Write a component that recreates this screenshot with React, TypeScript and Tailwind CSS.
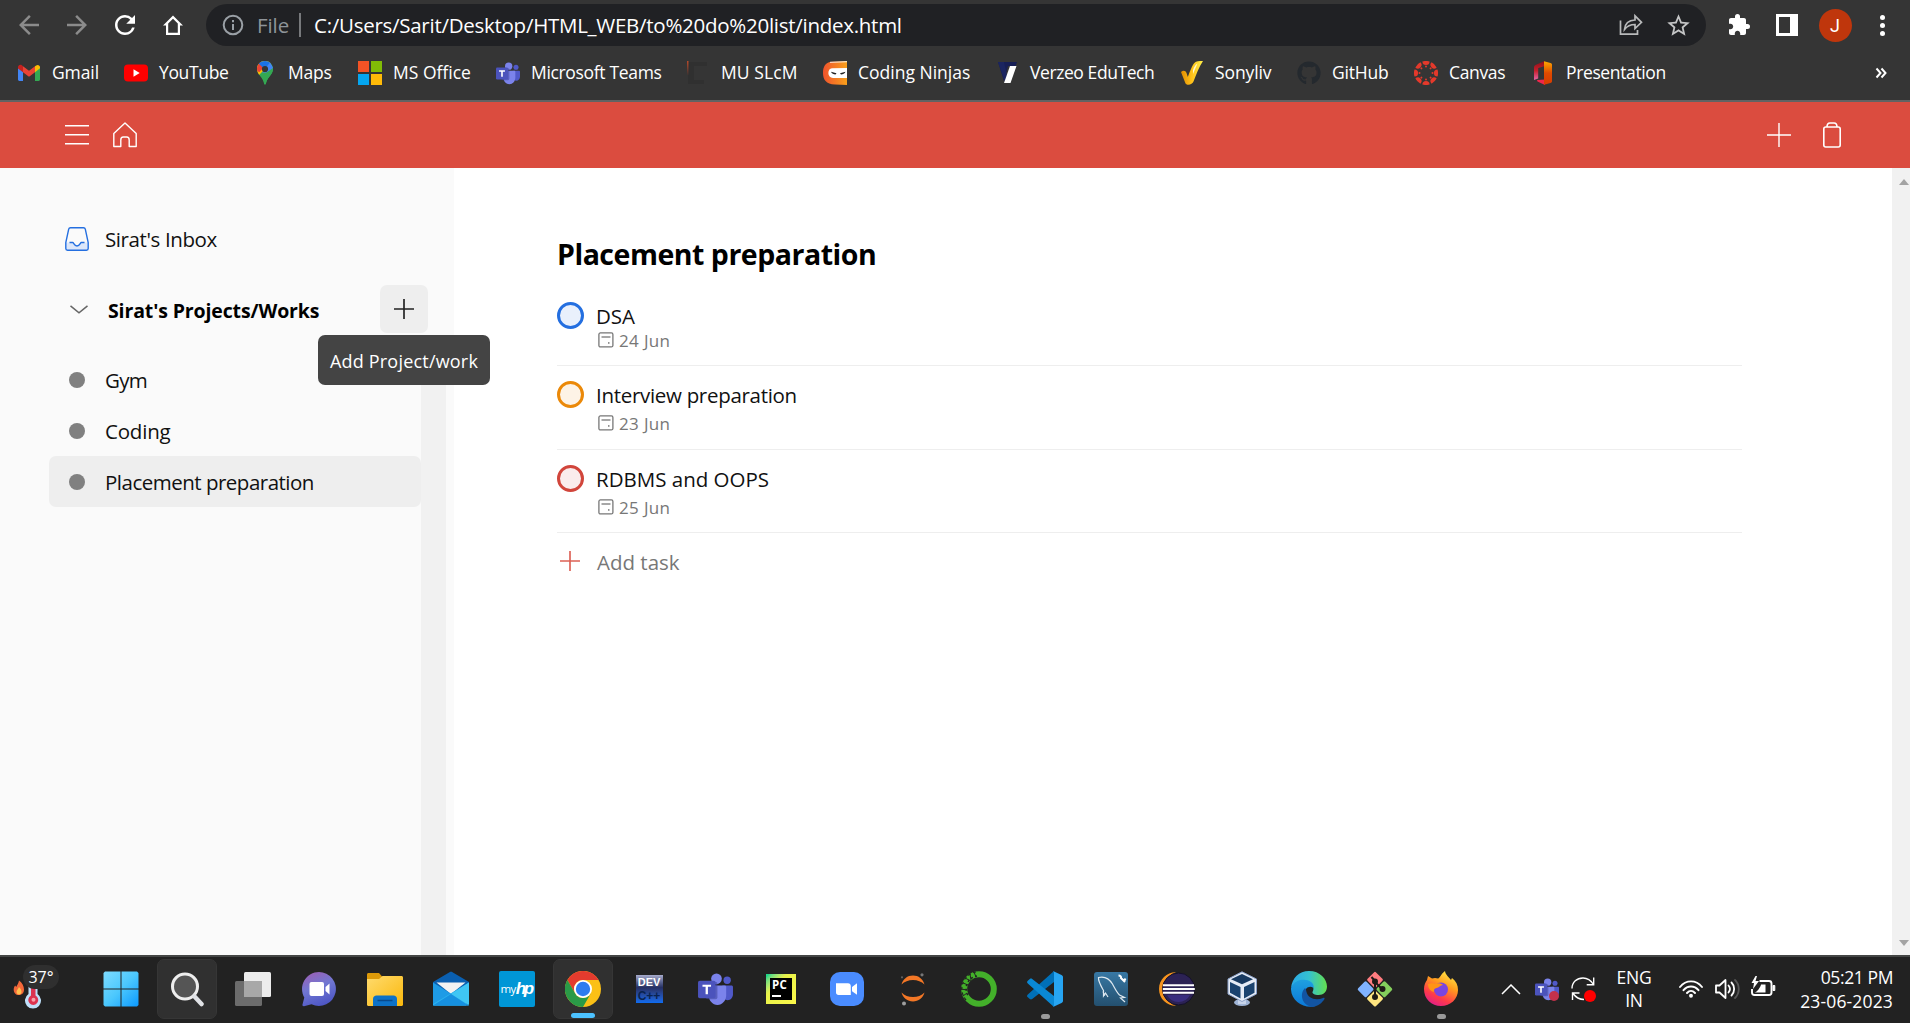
import type { ReactNode } from "react";
import { MdArrowBack, MdArrowForward, MdRefresh, MdExtension, MdStarBorder } from "react-icons/md";
import { FaGithub } from "react-icons/fa";

/* ---------- bookmark icons (24 × 24) ---------- */

const Gmail = () => (
  <svg viewBox="0 0 24 24" className="size-6">
    <path d="M1 6.500V18.600c0 .8.6 1.400 1.400 1.400H6V10.500z" fill="#4285f4" />
    <path d="M18 20h3.600c.8 0 1.400-.6 1.400-1.400V6.500L18 10.500z" fill="#34a853" />
    <path d="M18 5.200v6l5-4V6.200c0-2-2.200-3-3.800-1.800z" fill="#fbbc04" />
    <path d="M6 11.200v-6l6 4.600 6-4.600v6l-6 4.600z" fill="#ea4335" />
    <path d="M1 6.200v1.200l5 3.800v-6l-1.200-.9C3.200 3.200 1 4.300 1 6.200z" fill="#c5221f" />
  </svg>
);
const YouTube = () => (
  <svg viewBox="0 0 24 24" className="size-6">
    <rect x="0" y="3.500" width="24" height="17" rx="4" fill="#f00" />
    <path d="M9.500 8.200v7.600l6.200-3.800z" fill="#fff" />
  </svg>
);
const Maps = () => (
  <svg viewBox="0 0 24 24" className="size-6">
    <clipPath id="pin">
      <path d="M12 0c-4.500 0-8 3.500-8 8 0 3 1.600 5 3.500 7.500 2 2.600 3 4.500 3.600 7 .3 1.300 1.500 1.300 1.800 0 .6-2.500 1.600-4.400 3.600-7C18.400 13 20 11 20 8c0-4.500-3.500-8-8-8z" />
    </clipPath>
    <g clipPath="url(#pin)">
      <rect width="24" height="24" fill="#34a853" />
      <path d="M0 20 20 0v-2H0z" fill="#fbbc04" />
      <path d="M3 0v10l3.500 1L12 5 8 0z" fill="#ea4335" />
      <path d="M5.800 2.800 12 8.500 18 2V-1H6z" fill="#1a73e8" />
      <path d="m9 11.500 8-10 4 6-4 4z" fill="#4285f4" />
      <path d="m10 14 10-7v17h-9z" fill="#34a853" />
    </g>
    <circle cx="12" cy="8" r="3.100" fill="#353535" />
  </svg>
);
const MsOffice = () => (
  <div className="grid size-6 grid-cols-2 gap-0.5">
    <i className="bg-[#f35325]" />
    <i className="bg-[#81bc06]" />
    <i className="bg-[#05a6f0]" />
    <i className="bg-[#ffba08]" />
  </div>
);
const Teams = ({ className }: { className: string }) => (
  <svg viewBox="0 0 36 34" className={className}>
    <circle cx="30" cy="7.500" r="3.800" fill="#5059c9" />
    <path d="M25 13h9.500c.8 0 1.500.7 1.500 1.500V22c0 3.500-2.500 6-5.500 6S25 26 25 22z" fill="#5059c9" />
    <circle cx="19" cy="6" r="5.500" fill="#7b83eb" />
    <path d="M11 13h16.500c.9 0 1.500.6 1.500 1.500V23c0 5.500-4 10-9 10s-9-4.500-9-10z" fill="#7b83eb" />
    <rect x="8" y="9" width="12" height="18" rx="2" fill="#3e4399" opacity=".55" />
    <rect y="8" width="18" height="18" rx="1.800" fill="#4b53bc" />
    <path d="M4.600 12h8.800v2.200h-3.200V22H7.800v-7.800H4.600z" fill="#fff" />
  </svg>
);
const Slcm = () => (
  <svg viewBox="0 0 24 24" className="size-6">
    <defs>
      <linearGradient id="slcm" x2="0" y2="1">
        <stop offset="0" stopColor="#b8492a" />
        <stop offset="1" stopColor="#3c3331" />
      </linearGradient>
    </defs>
    <path d="M2 1h19v4H8v14h10v4H2z" fill="#303030" />
    <rect x="1" y="0" width="1.500" height="14" fill="url(#slcm)" />
  </svg>
);
const Ninja = () => (
  <svg viewBox="0 0 24 24" className="size-6">
    <defs>
      <linearGradient id="ninja">
        <stop offset="0" stopColor="#f0532d" />
        <stop offset="1" stopColor="#f9a01b" />
      </linearGradient>
    </defs>
    <path d="M9 .8 24 0v24l-12-.500C3 23.300 0 18.500 0 12S2.500 1.200 9 .8z" fill="url(#ninja)" />
    <path d="M7 .8 24 0v1.300L7 2z" fill="#fff" opacity=".7" />
    <path d="M9 7.300 24 7v10H10c-6 0-6-9.500-1-9.700z" fill="#fff" />
    <path d="m8 10.800 5.500 1.400-1 1.200c-2 0-3.700-.7-4.500-2.600zM22.500 10.800 17 12.200l1 1.200c2 0 3.700-.7 4.500-2.600z" fill="#222" />
  </svg>
);
const Verzeo = () => (
  <svg viewBox="0 0 24 24" className="size-6">
    <path d="M3 1h19l-1.500 4H13l-4 15z" fill="#171f55" />
    <path d="M3 1h6l3 14-2 6z" fill="#1b2560" />
    <path d="M15 5h6.500L15.500 22H9z" fill="#fff" />
  </svg>
);
const Sony = () => (
  <svg viewBox="0 0 24 24" className="size-6">
    <defs>
      <linearGradient id="tick" x1="0" x2="1">
        <stop offset="0" stopColor="#e08c00" />
        <stop offset=".5" stopColor="#ffc21a" />
        <stop offset="1" stopColor="#fff04a" />
      </linearGradient>
    </defs>
    <path d="M1 11c2-1.800 4.500-1.800 5.500 1l1.300 4C11 8 13 2 16 .8c2-1 5-.8 7-.8-4 6-7 14-9.500 20.500-1 3-6 4.500-8 2z" fill="url(#tick)" />
    <path d="M13 9c1.500-4 3-6 4.500-6.500L13 13z" fill="#fff8d0" />
  </svg>
);
const CanvasIcon = () => (
  <svg viewBox="-12 -12 24 24" className="size-6" fill="#e4392b">
    {[0, 45, 90, 135, 180, 225, 270, 315].map((a) => (
      <g key={a} transform={`rotate(${a})`}>
        <path d="M-3.600-11.500a12 12 0 0 1 7.200 0 3.600 3.600 0 0 1-7.200 0z" />
        <circle cy="-6.500" r="1" />
      </g>
    ))}
  </svg>
);
const Office = () => (
  <svg viewBox="0 0 24 24" className="size-6">
    <defs>
      <linearGradient id="offL" x2="0" y2="1">
        <stop offset="0" stopColor="#8f0f1a" />
        <stop offset=".5" stopColor="#c8202c" />
        <stop offset="1" stopColor="#e565a8" />
      </linearGradient>
      <linearGradient id="offR" x2="0" y2="1">
        <stop offset="0" stopColor="#ffa800" />
        <stop offset=".5" stopColor="#e04a00" />
        <stop offset="1" stopColor="#d83b01" />
      </linearGradient>
    </defs>
    <path d="M13 .3 4.500 4C3.500 4.500 3 5.200 3 6.500V19l4.200-1.500V7L14 5z" fill="url(#offL)" />
    <path d="m6 19 8-.5V24l-7.500-3.500z" fill="#f0264a" />
    <path d="M13 .3 19.500 2c1 .3 1.500 1 1.500 2v16c0 1-.5 1.700-1.500 2L13 23.800z" fill="url(#offR)" />
  </svg>
);

const bookmarks: { label: string; icon: ReactNode; width: string; tracking: string }[] = [
  { label: "Gmail", icon: <Gmail />, width: "w-[107px]", tracking: "tracking-[-0.1px]" },
  { label: "YouTube", icon: <YouTube />, width: "w-[129px]", tracking: "tracking-[-0.35px]" },
  { label: "Maps", icon: <Maps />, width: "w-[105px]", tracking: "tracking-[-0.2px]" },
  { label: "MS Office", icon: <MsOffice />, width: "w-[138px]", tracking: "tracking-normal" },
  { label: "Microsoft Teams", icon: <Teams className="h-[23px] w-6" />, width: "w-[190px]", tracking: "tracking-[-0.33px]" },
  { label: "MU SLcM", icon: <Slcm />, width: "w-[137px]", tracking: "tracking-[0.1px]" },
  { label: "Coding Ninjas", icon: <Ninja />, width: "w-[172px]", tracking: "tracking-normal" },
  { label: "Verzeo EduTech", icon: <Verzeo />, width: "w-[185px]", tracking: "tracking-[-0.42px]" },
  { label: "Sonyliv", icon: <Sony />, width: "w-[117px]", tracking: "tracking-[-0.1px]" },
  { label: "GitHub", icon: <FaGithub className="size-6 text-[#24292e]" />, width: "w-[117px]", tracking: "tracking-[-0.2px]" },
  { label: "Canvas", icon: <CanvasIcon />, width: "w-[117px]", tracking: "tracking-[-0.35px]" },
  { label: "Presentation", icon: <Office />, width: "w-[150px]", tracking: "tracking-[-0.37px]" },
];

const Cell = ({ children }: { children: ReactNode }) => (
  <div className="flex h-full w-12 shrink-0 items-center justify-center">{children}</div>
);

function BrowserBar() {
  return (
    <header className="flex h-[102px] shrink-0 flex-col border-b-2 border-[#626262] bg-[#353535]">
      <div className="flex h-[50px] items-center pl-[5px]">
        <Cell><MdArrowBack className="size-[30px] text-[#8b8b8b]" /></Cell>
        <Cell><MdArrowForward className="size-[30px] text-[#8b8b8b]" /></Cell>
        <Cell><MdRefresh className="size-[30px] text-white" /></Cell>
        <Cell>
          <svg viewBox="0 0 24 24" className="size-6" fill="#fff" fillRule="evenodd">
            <path d="M12 2.500 2 12.500h3V22h14v-9.500h3zM16.800 10.500v9.300H7.200v-9.300L12 5.700z" />
          </svg>
        </Cell>
        <div className="ml-[9px] flex h-[42px] w-[1500px] shrink-0 items-center rounded-full bg-[#202124] pl-[16px]">
          <svg viewBox="0 0 22 22" className="size-[22px]" fill="none" stroke="#9aa0a6" strokeWidth="2">
            <circle cx="11" cy="11" r="9.300" />
            <path d="M11 10v6M11 6v2.200" />
          </svg>
          <span className="ml-[13px] w-[42px] text-[20.5px] tracking-[-0.1px] text-[#8f9499]">File</span>
          <span className="h-6 w-0.5 bg-[#77797c]" />
          <span className="ml-[13px] text-[20.5px] tracking-[-0.27px] text-white">
            C:/Users/Sarit/Desktop/HTML_WEB/to%20do%20list/index.html
          </span>
          <div className="ml-auto flex h-full items-center pr-[3px]">
            <Cell>
              <svg viewBox="0 0 24 24" className="size-6" fill="none" stroke="#b9babb" strokeWidth="1.700">
                <path d="M1.500 7.500v13.700h17V17" />
                <path d="M5.500 16.500C6 10.500 9.500 7.200 16 7V2.800l6.500 6.500-6.500 6.200V11.500c-4.500 0-7.500 1-10.500 5z" />
              </svg>
            </Cell>
            <Cell><MdStarBorder className="mr-px size-[27px] text-[#c4c5c6]" /></Cell>
          </div>
        </div>
        <div className="ml-[9px] flex h-full items-center">
          <Cell><MdExtension className="size-6 text-white" /></Cell>
          <Cell>
            <span className="flex size-[22px] border-3 border-white"><i className="ml-auto w-[5px] bg-white" /></span>
          </Cell>
          <Cell>
            <span className="flex size-[33px] items-center justify-center rounded-full bg-[#bf360c] font-['Roboto'] text-[18px] text-white">J</span>
          </Cell>
          <Cell>
            <span className="mr-px flex flex-col gap-[3px]">
              <i className="size-[5px] rounded-full bg-white" />
              <i className="size-[5px] rounded-full bg-white" />
              <i className="size-[5px] rounded-full bg-white" />
            </span>
          </Cell>
        </div>
      </div>
      <nav className="flex h-[46px] items-center pl-[17px] text-[17.5px] text-white">
        {bookmarks.map((b) => (
          <div key={b.label} className={`flex shrink-0 items-center gap-[11px] whitespace-nowrap ${b.width}`}>
            <span className="flex size-6 shrink-0 items-center justify-center">{b.icon}</span>
            <span className={`mb-0.5 ${b.tracking}`}>{b.label}</span>
          </div>
        ))}
        <svg viewBox="0 0 12 12" className="mr-[23px] mb-px ml-auto size-3" fill="none" stroke="#fff" strokeWidth="2">
          <path d="m1.500 1.500 4 4.500-4 4.500M6.500 1.500l4 4.500-4 4.500" />
        </svg>
      </nav>
    </header>
  );
}

const Plus = ({ className, width }: { className: string; width: number }) => (
  <svg viewBox="0 0 24 24" className={className} fill="none" stroke="currentColor" strokeWidth={width}>
    <path d="M12 0v24M0 12h24" />
  </svg>
);

function AppBar() {
  return (
    <div className="flex h-[66px] shrink-0 items-center bg-[#db4c3f] pr-[68px] pb-px pl-[65px] text-white">
      <svg viewBox="0 0 24 24" className="size-6" fill="none" stroke="currentColor" strokeWidth="1.500">
        <path d="M0 2.700h24M0 11.700h24M0 20.700h24" />
      </svg>
      <svg viewBox="0 0 24 26" className="ml-6 h-[26px] w-6" fill="none" stroke="currentColor" strokeWidth="1.400" strokeLinejoin="round">
        <path d="M.8 24.500V11.500L12 1l11.200 10.500v13h-7V18c0-2-1-3-2.500-3h-3.400c-1.500 0-2.500 1-2.500 3v6.500z" />
      </svg>
      <Plus className="ml-auto size-6" width={1.400} />
      <svg viewBox="0 0 20 28" className="ml-[31px] h-7 w-5" fill="none" stroke="currentColor" strokeWidth="1.600">
        <rect x="1.800" y="6" width="16.400" height="20" rx="2" />
        <path d="M5 6c0-3 1-4 3-4h4c2 0 3 1 3 4" />
      </svg>
    </div>
  );
}

const projects = [
  { name: "Gym", active: false, tracking: "tracking-[-0.7px]" },
  { name: "Coding", active: false, tracking: "tracking-[-0.2px]" },
  { name: "Placement preparation", active: true, tracking: "tracking-[-0.5px]" },
];

function Sidebar() {
  return (
    <aside className="relative flex w-[454px] shrink-0 bg-[#fafafa] pl-[49px]">
      <div className="flex w-[372px] flex-col">
        <div className="mt-[45px] flex h-[51px] items-center pl-4">
          <svg viewBox="0 0 24 24" className="size-6" fill="none" stroke="#246fe0" strokeWidth="1.400">
            <path d="M.8 15.500h6.700c1 0 1.500 4 4.500 4s3.500-4 4.500-4h6.700v6c0 1-.6 1.700-1.700 1.700H2.500c-1.100 0-1.700-.7-1.700-1.700z" fill="#dce7fa" stroke="none" />
            <path d="M5.500.8h13c1 0 1.600.5 1.800 1.400l2.900 13.300v6c0 1-.6 1.700-1.700 1.700h-19c-1.100 0-1.700-.7-1.700-1.700v-6L3.700 2.200C3.900 1.300 4.500.8 5.500.8z" />
            <path d="M4.500 15.500h3.200c1 0 1.500 3.500 4.300 3.500s3.300-3.500 4.300-3.500h3.200" />
          </svg>
          <span className="mt-0.5 ml-4 text-[20.5px] tracking-[-0.4px]">Sirat's Inbox</span>
        </div>
        <div className="mt-[21px] flex h-12 items-center pl-[21px]">
          <svg viewBox="0 0 18 9" className="h-[9px] w-[18px]" fill="none" stroke="#666" strokeWidth="1.500">
            <path d="m.5.800 8.500 7 8.500-7" />
          </svg>
          <span className="mt-[3px] ml-5 text-[19.5px] font-bold tracking-[-0.13px] text-black">Sirat's Projects/Works</span>
          <div className="relative ml-auto -mr-[7px] flex size-12 shrink-0 items-center justify-center rounded-[7px] bg-[#eee]">
            <Plus className="size-5 text-[#222]" width={2} />
            <div className="absolute top-[50px] left-1/2 z-10 flex h-[50px] w-[172px] -translate-x-1/2 items-center justify-center rounded-[7px] bg-[#444] pt-0.5 text-[18px] tracking-[0.2px] whitespace-nowrap text-white">
              Add Project/work
            </div>
          </div>
        </div>
        <ul className="mt-[21px]">
          {projects.map((p) => (
            <li key={p.name} className={`flex h-[51px] items-center rounded-[7px] pl-5 ${p.active ? "bg-[#eee]" : ""}`}>
              <i className="size-4 rounded-full bg-[#808080]" />
              <span className={`mt-0.5 ml-5 text-[20.5px] ${p.tracking}`}>{p.name}</span>
            </li>
          ))}
        </ul>
      </div>
      <div className="mt-[200px] w-[25px] bg-[#f1f1f1]" />
    </aside>
  );
}

const DateIcon = () => (
  <svg viewBox="0 0 16 16" className="mb-px size-4" fill="none" stroke="#777" strokeWidth="1.300">
    <rect x=".9" y=".9" width="14" height="14" rx="1.500" />
    <path d="M3.500 5h9" />
    <rect x="10" y="10.200" width="1.500" height="1.500" fill="#777" stroke="none" />
  </svg>
);

const tasks = [
  { name: "DSA", date: "24 Jun", ring: "border-[#246fe0] bg-[#e9f0fc]", row: "h-[70px] pt-[6px]", dateRow: "-mt-px", tracking: "tracking-[-0.1px]" },
  { name: "Interview preparation", date: "23 Jun", ring: "border-[#eb8909] bg-[#fdf3e6]", row: "h-[84px] pt-[15px]", dateRow: "mt-[3px]", tracking: "tracking-[-0.3px]" },
  { name: "RDBMS and OOPS", date: "25 Jun", ring: "border-[#d1453b] bg-[#faecec]", row: "h-[83px] pt-[15px]", dateRow: "mt-[3px]", tracking: "tracking-[0px]" },
];

function Main() {
  return (
    <main className="flex-1 pt-[66px] pr-[150px] pl-[103px]">
      <h1 className="h-[62px] text-[28.5px] leading-[40px] font-bold tracking-[-0.48px] text-black">Placement preparation</h1>
      <ul>
        {tasks.map((t) => (
          <li key={t.name} className={`flex border-b border-[#eee] ${t.row}`}>
            <i className={`size-[27px] shrink-0 rounded-full border-3 ${t.ring}`} />
            <div className="ml-[12px] flex flex-col">
              <span className={`h-[27px] text-[20.5px] leading-[28px] ${t.tracking}`}>{t.name}</span>
              <div className={`flex h-[24px] items-center gap-[5px] pl-[2px] text-[17px] tracking-[0.35px] text-[#777] ${t.dateRow}`}>
                <DateIcon />
                <span className="mt-[2px]">{t.date}</span>
              </div>
            </div>
          </li>
        ))}
      </ul>
      <div className="flex h-[56px] items-center pl-[3px]">
        <Plus className="size-5 text-[#dd6156]" width={2} />
        <span className="mt-[2px] ml-[17px] text-[20.5px] text-[#777]">Add task</span>
      </div>
    </main>
  );
}

/* ---------- taskbar icons (36 × 36) ---------- */

const icon = "size-9";

const Windows = () => (
  <svg viewBox="0 0 36 36" className={icon}>
    <defs>
      <linearGradient id="win" x2="1" y2="1" gradientUnits="objectBoundingBox">
        <stop offset="0" stopColor="#7fdcff" />
        <stop offset=".5" stopColor="#4cc8fd" />
        <stop offset="1" stopColor="#0a98ff" />
      </linearGradient>
      <clipPath id="panes">
        <path d="M2 .5h15.500v17H.5V2zM18.500.5H34L35.500 2v15.500h-17zM.5 18.500h17v17H2L.5 34zM18.500 18.500h17V34L34 35.500H18.500z" />
      </clipPath>
    </defs>
    <rect width="36" height="36" fill="url(#win)" clipPath="url(#panes)" />
  </svg>
);
const Search = () => (
  <svg viewBox="0 0 36 36" className={icon}>
    <circle cx="16" cy="15.500" r="12.500" fill="#555" stroke="#eee" strokeWidth="3" />
    <path d="m25.500 25.500 7 7.500" stroke="#e0e2e6" strokeWidth="4.500" strokeLinecap="round" />
  </svg>
);
const TaskView = () => (
  <svg viewBox="0 0 36 36" className={icon}>
    <rect x="9" y="1" width="27" height="25" rx="1.500" fill="#ececec" />
    <rect x="0" y="10" width="27" height="25" rx="1.500" fill="#6c6c6c" />
    <rect x="9" y="10" width="18" height="16" fill="#a8a8a8" />
  </svg>
);
const Chat = () => (
  <svg viewBox="0 0 36 36" className={icon}>
    <defs>
      <linearGradient id="chat" x1=".2" y1="0" x2=".6" y2="1">
        <stop offset="0" stopColor="#9b5fb5" />
        <stop offset=".45" stopColor="#7177d2" />
        <stop offset="1" stopColor="#4c55c4" />
      </linearGradient>
    </defs>
    <path d="M18 1a17 17 0 1 1-7.500 32.300L3 35.200c-1 .2-2-.5-1.500-1.700L3.300 26.500A17 17 0 0 1 18 1z" fill="url(#chat)" />
    <rect x="8.500" y="11" width="14.500" height="14" rx="2" fill="#fff" />
    <path d="m24.500 16 4-3.500v11l-4-3.500z" fill="#fff" />
  </svg>
);
const Explorer = () => (
  <svg viewBox="0 0 36 36" className={icon}>
    <defs>
      <linearGradient id="fold" x2="1" y2="1">
        <stop offset="0" stopColor="#ffdb6e" />
        <stop offset="1" stopColor="#fab80c" />
      </linearGradient>
    </defs>
    <path d="M0 3.500C0 2.500.7 2 1.500 2H12l3.500 4v4H0z" fill="#dd9a09" />
    <path d="M0 8h12l3.500-3H34.500c.9 0 1.500.6 1.500 1.500v27c0 .9-.6 1.500-1.500 1.500h-33C.6 35 0 34.400 0 33.500z" fill="url(#fold)" />
    <path d="M6 35v-7c0-2 1.500-3.500 3.500-3.500h17c2 0 3.500 1.500 3.500 3.500v7z" fill="#0d72c7" />
    <path d="M10.500 29.500h15" stroke="#084a8c" strokeWidth="1.500" />
  </svg>
);
const Mail = () => (
  <svg viewBox="0 0 36 36" className={icon}>
    <path d="M0 11 16.500 1.200c1-.6 2-.6 3 0L36 11v3L18 24 0 14z" fill="#0a5fb0" />
    <path d="M3.500 11.500h29L18 23z" fill="#f2f2f2" />
    <path d="M0 11.500 36 34v.500H1.500C.5 34.500 0 34 0 33z" fill="#1e9be6" />
    <path d="M36 11.500 0 33v1.500h33z" fill="#2bb1ee" />
    <path d="m36 11.500-18 11.500L35.500 34l.5-1z" fill="#3fc6f4" />
    <path d="M18 23 0 34.500h35.500z" fill="#1690e0" />
  </svg>
);
const MyHp = () => (
  <div className="flex size-9 items-center justify-center rounded-[2px] bg-[#0096d6] text-white">
    <span className="text-[11.5px] tracking-[-0.5px]">my</span>
    <span className="mr-0.5 font-['Liberation_Sans'] text-[17px] font-bold tracking-[-2.5px] italic">hp</span>
  </div>
);
const Chrome = () => (
  <svg viewBox="-18 -18 36 36" className={icon}>
    <circle r="18" fill="#fbc016" />
    <path d="M-15.600-9A18 18 0 0 1 15.600-9H0A9 9 0 0 0-7.800 4.500z" fill="#e33b2e" />
    <path d="M-15.600-9A18 18 0 0 0 0 18L7.800 4.500A9 9 0 0 1-7.800 4.500z" fill="#2a9a47" />
    <circle r="9" fill="#fff" />
    <circle r="7.200" fill="#2e7cf0" />
  </svg>
);
const DevCpp = () => (
  <div className="flex h-[28px] w-[27px] flex-col items-center overflow-hidden bg-linear-to-b from-[#a7abcb] via-[#263063] via-45% to-[#0c6cf0] font-['Liberation_Sans'] font-bold">
    <span className="text-[11px] leading-[14px] text-white">DEV</span>
    <span className="text-[12px] leading-[14px] text-[#0a2350]">C++</span>
  </div>
);
const PyCharm = () => (
  <div className="flex size-[30px] items-center justify-center bg-linear-to-br from-[#21d789] from-5% via-[#e8f24a] via-35% to-[#fcf84a]">
    <div className="flex size-[22px] flex-col bg-black pl-[2px]">
      <span className="text-[11.5px] leading-[14px] font-bold tracking-[0.3px] text-white">PC</span>
      <i className="mt-[3px] h-[2px] w-[9px] bg-white" />
    </div>
  </div>
);
const Zoom = () => (
  <svg viewBox="0 0 36 36" className={icon}>
    <rect x="1" y="1" width="34" height="34" rx="10" fill="#4a8cff" />
    <path d="M7 12.200h12c1.700 0 2.800 1.100 2.800 2.800v9H9.500C8 24 7 22.800 7 21.500zM23 16l5-3.700v11.500L23 20.300z" fill="#fff" />
  </svg>
);
const Jupyter = () => (
  <svg viewBox="0 0 36 36" className={icon}>
    <path d="M6.500 13.500C8 8 12.500 4.600 18 4.600S28 8 29.500 13.500C26.500 10.500 22.500 9 18 9S9.500 10.500 6.500 13.500zM6.500 21.500C8 27 12.500 30.400 18 30.400S28 27 29.500 21.500C26.500 24.500 22.500 26 18 26S9.500 24.500 6.500 21.500z" fill="#f37726" />
    <circle cx="27" cy="3.800" r="1.600" fill="#767677" />
    <circle cx="9" cy="32.500" r="2" fill="#9e9e9e" />
    <circle cx="7" cy="6.300" r="1.100" fill="#616262" />
  </svg>
);
const Anaconda = () => (
  <svg viewBox="-18 -18 36 36" className={icon} fill="none">
    <circle r="14.800" stroke="#43b02a" strokeWidth="6" />
    <path d="M-3-17A17 17 0 0 0-12 12" stroke="#222" strokeWidth="1.200" strokeDasharray="3 2.500" />
    <path d="M-2-13A13 13 0 0 0-10 8" stroke="#222" strokeWidth="1.500" strokeDasharray="2 2.500" />
    <path d="m-5-17 2 5M-9-15l1 6M-14-11l6 3M-16-6l5 2M-18 0l6 1M-16 7l4-3" stroke="#222" strokeWidth="1" />
  </svg>
);
const VsCode = () => (
  <svg viewBox="0 0 36 36" className={icon}>
    <path d="M27 0 .8 23.500c-1 1-1 2 0 2.800l2 1.800c.8.600 1.600.6 2.400 0L27 11z" fill="#0070b8" />
    <path d="M27 36 .8 12.500c-1-1-1-2 0-2.800l2-1.800c.8-.6 1.600-.6 2.400 0L27 25z" fill="#0a88d4" />
    <path d="m26 0 8.500 4c1 .5 1.500 1.200 1.500 2v24c0 .8-.5 1.500-1.500 2L26 36c.7-.4 1-.8 1-2V2c0-1-.3-1.500-1-2z" fill="#27a5f2" />
  </svg>
);
const MySql = () => (
  <svg viewBox="0 0 36 36" className={icon} fill="none">
    <defs>
      <linearGradient id="mysql" x2="0" y2="1">
        <stop offset="0" stopColor="#3878a4" />
        <stop offset="1" stopColor="#24506f" />
      </linearGradient>
    </defs>
    <rect x="1" y="1" width="34" height="34" rx="3" fill="url(#mysql)" />
    <path d="M12 24.500c-1.500-1-2-3-1.500-5C8 15 5 10 5.500 6.500c6-1.500 11 1.500 14 6.500 2.500 4.500 4 8 7 11l5 2.500-4 .5 4.500 4M10.500 20v5l2-3 2.500 4" stroke="#dfe9f0" strokeWidth="1.200" />
    <path d="M25.500 4.500c2 0 3 1.500 2.500 2.500l4 4M32.500 7.500l-1.500 3" stroke="#fff" strokeWidth="2" />
  </svg>
);
const Eclipse = () => (
  <svg viewBox="0 0 36 36" className={icon}>
    <path d="M17 1.200C8 1 0 8 0 18s8 17 17 16.800C9 32 5 26 5 18S9 4 17 1.200z" fill="#f7941e" />
    <circle cx="19.500" cy="18" r="16" fill="#2c2255" stroke="#15112a" />
    <path d="M8 24a13 13 0 0 0 23 0z" fill="#43359a" opacity=".6" />
    <path d="M4 14.200h31M3.800 18h32M4 21.800h31" stroke="#fff" strokeWidth="1.900" />
  </svg>
);
const VirtualBox = () => (
  <svg viewBox="0 0 36 36" className={icon}>
    <ellipse cx="17" cy="31.500" rx="8" ry="3.500" fill="#9fb4d6" />
    <path d="M13 25h8v8h-8z" fill="#c7d4ea" />
    <path d="M17 .8 31.500 8v15L17 30.500 3 23V8z" fill="#e6ecf6" stroke="#8aa0c8" />
    <path d="m17 3 11 5.200-11 5-11-5z" fill="#183a61" />
    <path d="m5 11 10.500 5v11.500L5 21.800zM29.500 11 19 16v11.500l10.500-5.700z" fill="#1b436f" />
  </svg>
);
const Edge = () => (
  <svg viewBox="0 0 36 36" className={icon}>
    <defs>
      <linearGradient id="edgeTop">
        <stop offset="0" stopColor="#2aa8e8" />
        <stop offset=".5" stopColor="#35c1d0" />
        <stop offset="1" stopColor="#63e04e" />
      </linearGradient>
      <linearGradient id="edgeL" x2="0" y2="1">
        <stop offset="0" stopColor="#1fa0e0" />
        <stop offset="1" stopColor="#0b78d8" />
      </linearGradient>
    </defs>
    <path d="M0 17C1 7 8 0 18 0c11 0 18 8 18 15.500 0 5-3.500 8.500-8.500 8.500-4 0-6.500-1.500-6-3 2-3 1-8-5-9.500C10 10 3 12 0 17z" fill="url(#edgeTop)" />
    <path d="M0 17c3-7 9-9 15-8 6 .8 8.500 5 7.500 8-4-3-9 0-9 6 0 6 5 12 11 12C13 38-.5 30 0 17z" fill="url(#edgeL)" />
    <path d="M14 17c-6 6-3 17 7 19 6-.5 10-4 12.500-8 .3-1-.5-1.500-1.500-1C24 30 17 27 15.500 21c-.3-1.500-.5-3-1.500-4z" fill="#1254a2" />
  </svg>
);
const Git = () => (
  <svg viewBox="0 0 36 36" className={icon}>
    <g transform="rotate(45 18 18)">
      <rect x="5.500" y="5.500" width="12" height="12" rx="1.500" fill="#ff7c80" />
      <rect x="18.800" y="5.500" width="12" height="12" rx="1.500" fill="#84cf5c" />
      <rect x="5.500" y="18.800" width="12" height="12" rx="1.500" fill="#80b3ff" />
      <rect x="18.800" y="18.800" width="12" height="12" rx="1.500" fill="#ffe680" />
    </g>
    <g fill="none" stroke="#1f1a17" strokeWidth="2">
      <path d="M14.500 6 18 10v16M18 11l7 7" />
      <circle cx="18" cy="10.500" r="2" fill="#1f1a17" />
      <circle cx="18" cy="26" r="2" fill="#1f1a17" />
      <circle cx="25.500" cy="18" r="2" fill="#1f1a17" />
    </g>
  </svg>
);
const Firefox = () => (
  <svg viewBox="0 0 36 36" className={icon}>
    <defs>
      <linearGradient id="fox" x1=".8" y1="0" x2=".3" y2="1">
        <stop offset="0" stopColor="#fff04a" />
        <stop offset=".4" stopColor="#ff9a1e" />
        <stop offset=".75" stopColor="#ff3a4a" />
        <stop offset="1" stopColor="#e01e8a" />
      </linearGradient>
    </defs>
    <path d="M1 18c0-4 1.500-7 3-9l1-4 4 2.500c2-.8 4-.8 6 0C17 7 18 3 22 0c.5 4 4 6 6 9l1-2c4 3 6 7 6 12 0 9-7.500 16-17 16S1 28 1 18z" fill="url(#fox)" />
    <circle cx="18" cy="18.500" r="7" fill="#7a45e0" />
    <path d="M5 13c3-1 5-1 7 0 2-1.500 6-1 8 1-3 .5-4 2.500-6.500 3-2 .4-3 1.500-2.500 4-4-1-6-4-6-8z" fill="#ff9416" />
  </svg>
);

const apps: { name: string; icon: ReactNode; tile?: boolean; mark?: string }[] = [
  { name: "start", icon: <Windows /> },
  { name: "search", icon: <Search />, tile: true },
  { name: "taskview", icon: <TaskView /> },
  { name: "chat", icon: <Chat /> },
  { name: "explorer", icon: <Explorer /> },
  { name: "mail", icon: <Mail /> },
  { name: "myhp", icon: <MyHp /> },
  { name: "chrome", icon: <Chrome />, tile: true, mark: "w-6 bg-[#4cc2ff]" },
  { name: "devcpp", icon: <DevCpp /> },
  { name: "teams", icon: <Teams className="h-[33px] w-[35px]" /> },
  { name: "pycharm", icon: <PyCharm /> },
  { name: "zoom", icon: <Zoom /> },
  { name: "jupyter", icon: <Jupyter /> },
  { name: "anaconda", icon: <Anaconda /> },
  { name: "vscode", icon: <VsCode />, mark: "w-[9px] bg-[#9a9a9a]" },
  { name: "mysql", icon: <MySql /> },
  { name: "eclipse", icon: <Eclipse /> },
  { name: "virtualbox", icon: <VirtualBox /> },
  { name: "edge", icon: <Edge /> },
  { name: "git", icon: <Git /> },
  { name: "firefox", icon: <Firefox />, mark: "w-[9px] bg-[#9a9a9a]" },
];

function Taskbar() {
  return (
    <footer className="flex h-[68px] shrink-0 items-center border-t-2 border-[#444645] bg-[#222] pb-0.5 text-white">
      <div className="relative h-full w-[91px] shrink-0">
        <svg viewBox="0 0 46 44" className="absolute top-[8px] left-[13px] h-11 w-[46px]">
          <path d="M6 15.500c3 2 5 5.500 5 9 0 4-2.500 5.500-5.300 5.500S.7 28 .7 24.500c0-2 .7-3 1.500-4l1 1.500c1-2 2.500-4 2.800-6.500z" fill="#f2683a" />
          <path d="M6 22c1.500 1.500 2.500 3 2.500 5 0 1.500-1 2.500-2.500 2.500S3.500 28.500 3.500 27 5 24 6 22z" fill="#ffc04d" />
          <path d="M15.500 12h9v17a8 8 0 1 1-9 0z" fill="#bfe0fa" />
          <path d="M18 12h4.500v18.500a5 5 0 1 1-4.500 0z" fill="#dc3350" />
          <circle cx="20.500" cy="34.800" r="2" fill="#f8a0ac" />
        </svg>
        <span className="absolute top-[8px] left-[23px] flex h-6 w-9 items-center justify-center rounded-full bg-[#2f2f2f] text-[16px] tracking-[-0.1px]">
          37°
        </span>
      </div>
      <div className="flex gap-1.5">
        {apps.map((a) => (
          <div
            key={a.name}
            className={`relative flex size-[60px] items-center justify-center rounded-[7px] ${a.tile ? "border border-[#363636] bg-[#303030]" : ""}`}
          >
            {a.icon}
            {a.mark && <i className={`absolute bottom-0 h-[5px] rounded-full ${a.mark}`} />}
          </div>
        ))}
      </div>
      <svg viewBox="0 0 20 11" className="ml-[30px] h-[11px] w-5" fill="none" stroke="#fff" strokeWidth="1.500">
        <path d="m1 10 9-9 9 9" />
      </svg>
      <div className="relative ml-[14px] flex">
        <Teams className="h-[23px] w-6" />
        <i className="absolute right-0 bottom-0 size-[10px] rounded-full bg-[#c4314b]" />
      </div>
      <div className="relative ml-[11px]">
        <svg viewBox="0 0 26 26" className="size-[26px]" fill="none" stroke="#fff" strokeWidth="1.400">
          <path d="M2 12.500C2 6 7 2 13 2c5 0 8 2.500 10.500 6.500M23.700 1.500v7.200h-7M2.500 24v-7h7M3 17.500c2.500 3.500 6 6 11 6" />
        </svg>
        <i className="absolute right-0 bottom-0 size-3 rounded-full bg-[#f00]" />
      </div>
      <div className="ml-[16px] flex w-[44px] flex-col items-center text-[17.5px] leading-[23px] tracking-[-0.2px]">
        <span>ENG</span>
        <span>IN</span>
      </div>
      <svg viewBox="0 0 24 18" className="ml-[23px] h-[18px] w-6" fill="none" stroke="#fff" strokeWidth="1.900" strokeLinecap="round">
        <path d="M1 7C7-.5 17-.5 23 7M4.500 10.200c4-5 11-5 15 0M8 13c2.500-2.800 5.500-2.800 8 0" />
        <circle cx="12" cy="15.700" r="1" />
      </svg>
      <svg viewBox="0 0 25 22" className="ml-3 h-[22px] w-[25px]" fill="none" stroke="#fff" strokeWidth="1.800" strokeLinejoin="round">
        <path d="M1 7.500h3.500L10.500 2v18l-6-5.500H1z" />
        <path d="M13.500 7.500c1.700 2 1.700 5 0 7M16.500 4.500c3.500 3.500 3.500 9.500 0 13" strokeLinecap="round" />
        <path d="M20 2c5 5 5 13 0 18" stroke="#555" strokeLinecap="round" />
      </svg>
      <svg viewBox="0 0 26 22" className="mb-1 ml-2.5 h-[22px] w-[26px]" fill="none" stroke="#fff" strokeWidth="1.900">
        <path d="M9.500 5H19c1.500 0 2.500 1 2.500 2.500v9c0 1.500-1 2.500-2.500 2.500H4.500C3 19 2 18 2 16.500V13" />
        <path d="M23 9.500h1.800v5H23z" fill="#fff" strokeWidth="1" />
        <path d="M11 8.500h4.500v8H4.500c2 0 6-5 6.500-8z" fill="#fff" stroke="none" />
        <path d="M5.500 0 1.500 7H4l-1 6 6-8H5.500L7 0z" fill="#fff" stroke="none" />
      </svg>
      <div className="mr-[17px] ml-auto flex flex-col items-end text-[17.5px] leading-[24px]">
        <span className="tracking-[-0.4px]">05:21 PM</span>
        <span className="tracking-[0.15px]">23-06-2023</span>
      </div>
    </footer>
  );
}

export default function App() {
  return (
    <div className="flex h-[1031px] w-[1910px] flex-col overflow-hidden bg-white font-['Open_Sans','Noto_Sans',sans-serif] text-[#111]">
      <BrowserBar />
      <AppBar />
      <div className="flex h-[787px] shrink-0">
        <Sidebar />
        <Main />
        <div className="flex w-[18px] shrink-0 flex-col items-end justify-between bg-[#f1f1f1] pt-[11px] pr-px pb-[9px]">
          <svg viewBox="0 0 10 6" className="h-1.5 w-2.5" fill="#a3a3a3"><path d="M0 6 5 0l5 6z" /></svg>
          <svg viewBox="0 0 10 6" className="h-1.5 w-2.5" fill="#a3a3a3"><path d="m0 0 5 6 5-6z" /></svg>
        </div>
      </div>
      <Taskbar />
    </div>
  );
}
